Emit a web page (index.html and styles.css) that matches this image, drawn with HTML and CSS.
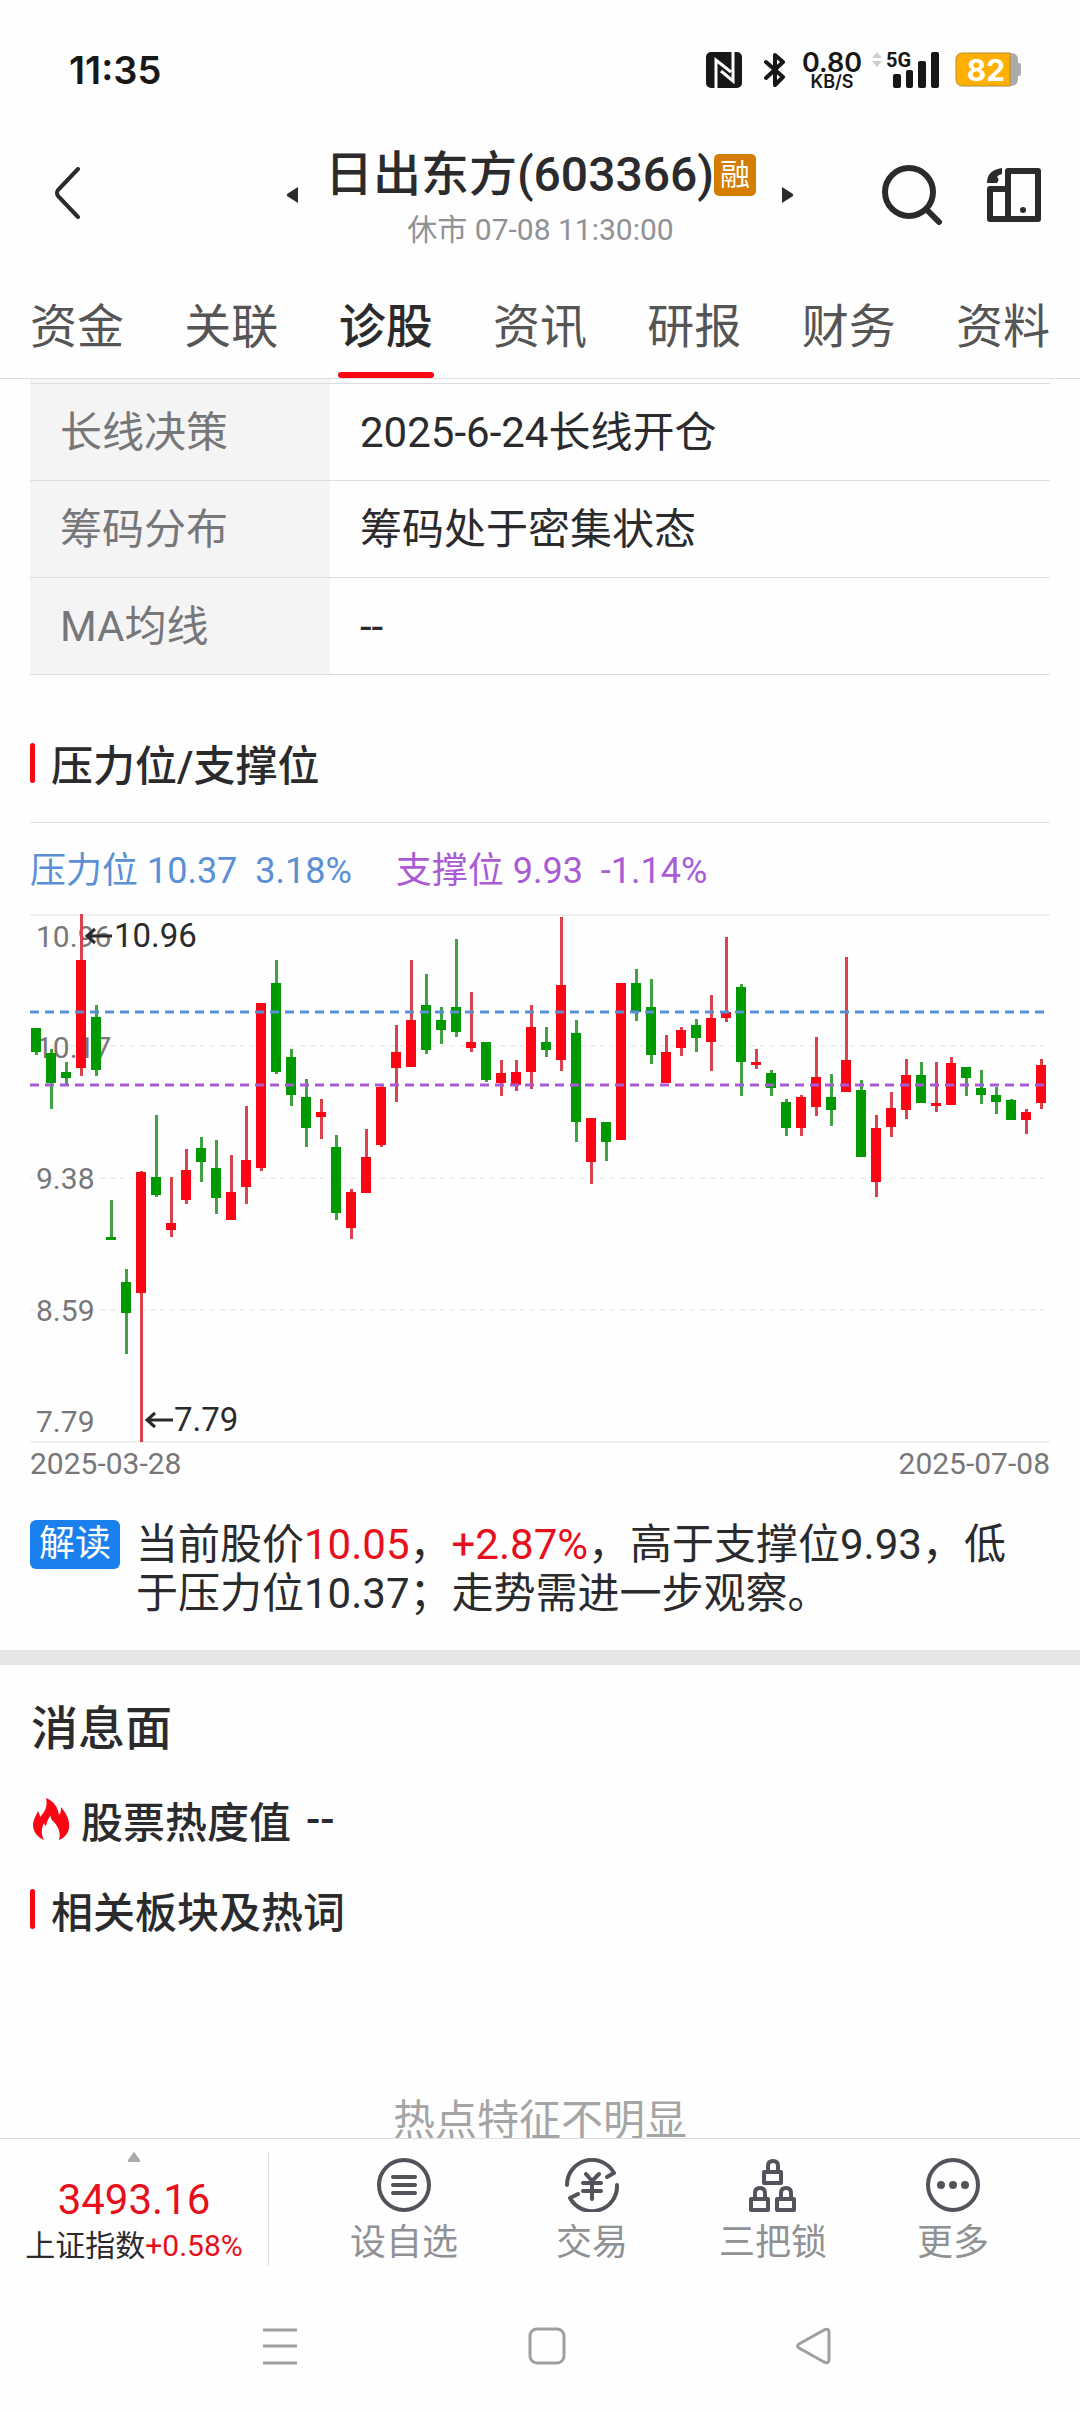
FILE: index.html
```html
<!DOCTYPE html>
<html lang="zh-CN">
<head>
	<meta charset="UTF-8">
	<meta name="viewport" content="width=device-width, initial-scale=1">
	<link rel="stylesheet" href="styles.css">
	<title>日出东方(603366)</title>
</head>
<body>
	<div class="status">
		<span class="time">11:35</span>
		<div class="status-icons">
			<svg class="nfc" width="36" height="36" viewBox="0 0 36 36">
				<rect width="36" height="36" rx="5" fill="#171717"/>
				<path d="M10 36V8l15 12M27 0v29L15 19" fill="none" stroke="#fff" stroke-width="3"/>
			</svg>
			<svg class="bt" width="22" height="36" viewBox="0 0 22 36">
				<path d="M2 10l17 15-8 8V3l8 7L2 26" fill="none" stroke="#171717" stroke-width="4" stroke-linejoin="round" stroke-linecap="round"/>
			</svg>
			<div class="speed"><b>0.80</b><small>KB/S</small></div>
			<svg class="signal" width="67" height="36" viewBox="0 0 67 36">
				<path d="M0 6l5-6 5 6zM0 9h10l-5 6z" fill="#cfcfcf"/>
				<text x="14" y="15" class="net">5G</text>
				<g fill="#171717">
					<rect x="21" y="22" width="8" height="14" rx="2"/>
					<rect x="34" y="18" width="7" height="18" rx="2"/>
					<rect x="46" y="9" width="8" height="27" rx="2"/>
					<rect x="59" width="8" height="36" rx="2"/>
				</g>
			</svg>
			<svg class="battery" width="66" height="36" viewBox="0 0 66 36">
				<path d="M54 1h2q7 0 7 7v3h1q2 0 2 3v7q0 3-2 3h-1v3q0 7-7 7h-2z" fill="#ababab"/>
				<path d="M55 1H8Q1 1 1 8v19q0 7 7 7h47z" fill="#ffb000" stroke="#b58a2a"/>
				<text x="31" y="29" text-anchor="middle" class="level">82</text>
			</svg>
		</div>
	</div>

	<header class="header">
		<div class="left">
			<button class="icon-btn" aria-label="返回">
				<svg width="28" height="52" viewBox="0 0 28 52"><path d="M25 2L5 23q-2 3 0 6l20 21" fill="none" stroke="#2b2b2d" stroke-width="4" stroke-linecap="round"/></svg>
			</button>
		</div>
		<div class="stock">
			<button class="icon-btn" aria-label="上一只">
				<svg width="12" height="18" viewBox="0 0 12 18"><path d="M12 1v16L1 10V8z" fill="#2b2b2d"/></svg>
			</button>
			<div class="title">
				<h1>日出东方(603366)<span class="badge">融</span></h1>
				<p>休市 07-08 11:30:00</p>
			</div>
			<button class="icon-btn" aria-label="下一只">
				<svg width="12" height="18" viewBox="0 0 12 18"><path d="M0 1v16l11-7V8z" fill="#2b2b2d"/></svg>
			</button>
		</div>
		<div class="right">
			<button class="icon-btn" aria-label="搜索">
				<svg width="62" height="62" viewBox="0 0 62 62" fill="none" stroke="#2b2b2d" stroke-width="6" stroke-linecap="round"><circle cx="28" cy="28" r="24"/><path d="M46 46l12 12"/></svg>
			</button>
			<button class="icon-btn" aria-label="多屏">
				<svg width="54" height="54" viewBox="0 0 54 54" fill="none" stroke="#2b2b2d" stroke-width="6" stroke-linejoin="round">
					<path d="M21 3h30v48H21zM21 21H3v30h18"/>
					<circle cx="36" cy="42" r="3" fill="#2b2b2d" stroke="none"/>
					<path d="M15 0Q0 2 0 15h10q3-4 0-6 1-2 5-3z" fill="#2b2b2d" stroke="none"/>
				</svg>
			</button>
		</div>
	</header>

	<nav class="tabs">
		<a href="#">资金</a>
		<a href="#">关联</a>
		<a href="#" class="active">诊股</a>
		<a href="#">资讯</a>
		<a href="#">研报</a>
		<a href="#">财务</a>
		<a href="#">资料</a>
	</nav>

	<main class="content">
		<section class="wrap">
			<table class="info">
				<tr class="cut"><th></th><td></td></tr>
				<tr><th>长线决策</th><td>2025-6-24长线开仓</td></tr>
				<tr><th>筹码分布</th><td>筹码处于密集状态</td></tr>
				<tr><th>MA均线</th><td>--</td></tr>
			</table>

			<h2 class="sub line">压力位/支撑位</h2>
			<div class="legend">
				<span class="blue">压力位 10.37&nbsp; 3.18%</span>
				<span class="purple">支撑位 9.93&nbsp; -1.14%</span>
			</div>
			<svg class="chart" id="chart" viewBox="0 0 1020 529">
				<path class="edge" d="M0 1h1020M0 528h1020"/>
				<path class="grid" d="M0 132h1020M0 264h1020M0 396h1020"/>
				<g class="axis">
					<text x="6" y="33">10.96</text>
					<text x="6" y="144">10.17</text>
					<text x="6" y="275">9.38</text>
					<text x="6" y="407">8.59</text>
					<text x="6" y="518">7.79</text>
				</g>
				<g id="candles"></g>
				<path class="press" d="M0 98h1020"/>
				<path class="hold" d="M0 171h1020"/>
				<g class="mark">
					<path d="M82 22H57M65 15l-8 7 8 7"/>
					<text x="84" y="33">10.96</text>
					<path d="M143 506h-26M125 499l-8 7 8 7"/>
					<text x="144" y="517">7.79</text>
				</g>
			</svg>
			<div class="dates"><span>2025-03-28</span><span>2025-07-08</span></div>
			<div class="explain">
				<span class="tag">解读</span>
				<p>当前股价<em>10.05</em>，<em>+2.87%</em>，高于支撑位9.93，低于压力位10.37；走势需进一步观察。</p>
			</div>
		</section>

		<section class="wrap news">
			<h2 class="big">消息面</h2>
			<div class="hot">
				<svg width="38" height="44" viewBox="0 0 38 44"><path d="M14 0c9 4 12 10 13 17 2-2 2-5 2-8 6 7 9 14 8 21-1 6-5 10-10 12 2-7 0-13-7-20-1-2-2-3-1-5-3 3-4 7-5 11-1-1-2-2-2-3-3 6-3 12 0 17C5 39 1 33 1 27c0-5 3-9 5-14 1 2 2 4 2 6 5-5 8-11 6-19z" fill="#fa0513"/></svg>
				<h3>股票热度值</h3>
				<span>--</span>
			</div>
			<h2 class="sub">相关板块及热词</h2>
			<p class="empty">热点特征不明显</p>
		</section>
	</main>

	<footer class="bar">
		<a href="#" class="index">
			<svg width="12" height="10" viewBox="0 0 12 10"><path d="M5 1L0 8v2h12V8L7 1q-1-2-2 0z" fill="#a9abad"/></svg>
			<strong>3493.16</strong>
			<span>上证指数<em>+0.58%</em></span>
		</a>
		<div class="actions">
			<button>
				<svg width="54" height="54" viewBox="0 0 54 54"><circle cx="27" cy="27" r="25"/><path d="M16 19h22M16 27h22M16 35h22"/></svg>
				设自选
			</button>
			<button>
				<svg width="54" height="54" viewBox="0 0 54 54"><path d="M2 27A25 25 0 0 1 49 15l-7 4M52 27A25 25 0 0 1 5 40l8-4M21 16l6 7 7-7M27 23v18M18 25h18M18 33h18"/></svg>
				交易
			</button>
			<button>
				<svg width="54" height="54" viewBox="0 0 54 54"><path d="M18 14h17v11H18zM22 13V8q0-5 5-5t5 5v5M5 41h17v11H5zM9 40v-5q0-5 5-5t5 5v5M31 41h17v11H31zM35 40v-5q0-5 5-5t5 5v5"/></svg>
				三把锁
			</button>
			<button>
				<svg width="54" height="54" viewBox="0 0 54 54"><circle cx="27" cy="27" r="25"/><path d="M15 27h0M27 27h0M39 27h0" stroke-width="8" class="dots"/></svg>
				更多
			</button>
		</div>
	</footer>

	<div class="sysnav">
		<button class="icon-btn" aria-label="最近任务"><svg width="36" height="38" viewBox="0 0 36 38"><path d="M1 3h34M1 19h34M1 36h34"/></svg></button>
		<button class="icon-btn" aria-label="主屏幕"><svg width="38" height="38" viewBox="0 0 38 38"><rect x="2" y="2" width="34" height="34" rx="7"/></svg></button>
		<button class="icon-btn" aria-label="后退"><svg width="36" height="38" viewBox="0 0 36 38"><path d="M29 3L4 17q-3 2 0 4l25 14q5 2 5-2V5q0-4-5-2z"/></svg></button>
	</div>

	<script src="script.js"></script>
</body>
</html>
```
FILE: styles.css
```css
* { margin: 0; padding: 0; box-sizing: border-box; }
body {
	display: flex;
	flex-direction: column;
	height: 100vh;
	overflow: hidden;
	background: #fefefe;
	color: #2b2b2d;
	font-family: Roboto, "Noto Sans CJK SC", sans-serif;
}
button { border: 0; background: none; font-family: inherit; }
a { color: inherit; text-decoration: none; }
em { color: #e60f1a; font-style: normal; }
svg { display: block; flex: none; }

/* 状态栏 */
.status {
	display: flex;
	justify-content: space-between;
	align-items: center;
	height: 110px;
	padding: 30px 59px 0 69px;
	font-family: Inter, sans-serif;
	color: #171717;
}
.time { font-size: 38px; font-weight: 600; }
.status-icons { display: flex; align-items: center; }
.nfc { margin-right: 22px; }
.bt { margin-right: 14px; }
.speed {
	display: flex;
	flex-direction: column;
	align-items: center;
	width: 64px;
	margin-right: 8px;
}
.speed b { font-size: 27px; font-weight: 600; line-height: 24px; }
.speed small { font-size: 18px; font-weight: 600; line-height: 14px; }
.signal { margin-right: 16px; overflow: visible; }
.net { font: 700 20px Roboto, sans-serif; fill: #171717; }
.level { font: 700 30px Inter, sans-serif; fill: #fff; }

/* 标题 */
.header {
	display: grid;
	grid-template-columns: 1fr auto 1fr;
	align-items: center;
	height: 170px;
	padding: 0 39px;
}
.left { padding-left: 14px; }
.stock { display: flex; align-items: center; }
.right { display: flex; align-items: center; justify-content: flex-end; gap: 44px; }
.title { margin: 10px 26px 0 27px; text-align: center; }
.title h1 {
	display: flex;
	align-items: center;
	font-size: 48px;
	font-weight: 500;
	line-height: 60px;
}
.title p { font-size: 30px; line-height: 50px; color: #8f9195; }
.badge {
	width: 42px;
	height: 42px;
	border-radius: 5px;
	background: #d47d00;
	color: #fff;
	font-size: 30px;
	font-weight: 400;
	line-height: 42px;
	text-align: center;
}

.tabs {
	display: flex;
	justify-content: space-between;
	height: 99px;
	padding: 0 29px;
	border-bottom: 1px solid #dedee0;
}
.tabs a {
	position: relative;
	padding: 0 1px;
	font-size: 47px;
	line-height: 94px;
	color: #555;
}
.tabs .active { font-weight: 500; color: #2b2b2d; }
.tabs .active::after {
	content: "";
	position: absolute;
	left: 0;
	right: 0;
	bottom: 0;
	height: 6px;
	border-radius: 3px;
	background: #fa0513;
}

.content { flex: 1 1 0; min-height: 0; overflow: hidden; }
.wrap { padding: 0 30px; }

.info { width: 100%; border-spacing: 0; table-layout: fixed; font-size: 42px; line-height: 60px; }
.info th, .info td {
	height: 97px;
	padding: 2px 30px 0;
	border-bottom: 1px solid #dedee0;
	font-weight: 400;
	text-align: left;
}
.info th { width: 300px; background: #f4f4f4; color: #77777a; }
.info .cut th, .info .cut td { height: 5px; }

.sub {
	display: flex;
	align-items: center;
	gap: 16px;
	height: 118px;
	padding-bottom: 2px;
	font-size: 42px;
	font-weight: 500;
}
.sub::before {
	content: "";
	width: 5px;
	height: 40px;
	border-radius: 3px;
	background: #fa0513;
}
.line { margin-top: 30px; border-bottom: 1px solid #dedee0; }

.legend { display: flex; gap: 44px; padding-top: 5px; font-size: 36px; line-height: 86px; }
.blue { color: #5b8fd6; }
.purple { color: #a95bd6; }

/* K线图 */
.chart { width: 100%; height: auto; }
.chart path { fill: none; }
.edge { stroke: #f0f0f0; stroke-width: 2; }
.grid { stroke: #f0f0f0; stroke-width: 2; stroke-dasharray: 5 5; }
.press { stroke: #5b8fd6; stroke-width: 3; stroke-dasharray: 9 6; }
.hold { stroke: #a95bd6; stroke-width: 3; stroke-dasharray: 9 6; }
.axis { font-size: 30px; fill: #77777a; }
.mark { font-size: 33px; fill: #2b2b2d; }
.mark path { stroke: #2b2b2d; stroke-width: 3; }
.up { fill: #fa0513; }
.down { fill: #009900; }
.up .wick { fill: #d9434b; }
.down .wick { fill: #3fa344; }

.dates {
	display: flex;
	justify-content: space-between;
	font-size: 30px;
	line-height: 42px;
	color: #77777a;
}
.explain {
	display: flex;
	align-items: flex-start;
	gap: 16px;
	margin-top: 35px;
	padding-right: 30px;
	font-size: 42px;
	line-height: 49px;
}
.tag {
	flex: none;
	width: 90px;
	border-radius: 6px;
	background: #1a80ee;
	color: #fff;
	font-size: 36px;
	text-align: center;
}

.news { margin-top: 32px; border-top: 15px solid #e5e5e7; }
.big { padding-left: 1px; font-size: 47px; font-weight: 500; line-height: 128px; }
.hot {
	display: flex;
	align-items: center;
	height: 58px;
	padding: 0 0 5px 2px;
	font-size: 42px;
}
.hot h3 { margin: 0 15px 0 11px; font-size: 42px; font-weight: 500; }
.hot span { font-weight: 500; }
.empty {
	margin-top: 122px;
	font-size: 42px;
	line-height: 60px;
	color: #a5a5a5;
	text-align: center;
}

/* 底部 */
.bar {
	display: flex;
	height: 142px;
	border-top: 1px solid #dedee0;
}
.index {
	display: flex;
	flex-direction: column;
	align-items: center;
	width: 269px;
	margin: 13px 0 14px;
	border-right: 1px solid #dedee0;
	font-size: 30px;
	line-height: 36px;
}
.index strong {
	margin-top: 10px;
	font-size: 42px;
	font-weight: 400;
	line-height: 56px;
	color: #e60f1a;
}
.actions {
	display: grid;
	grid-template-columns: 188fr 188fr 174fr 186fr;
	flex: 1;
	padding: 19px 34px 0 41px;
}
.actions button {
	display: flex;
	flex-direction: column;
	align-items: center;
	gap: 5px;
	font-size: 36px;
	line-height: 52px;
	color: #8f9195;
}
.actions svg { fill: none; stroke: #53535b; stroke-width: 4; stroke-linecap: round; stroke-linejoin: round; }

.sysnav {
	display: flex;
	justify-content: space-between;
	align-items: center;
	height: 132px;
	padding: 0 249px 0 262px;
}
.sysnav svg { fill: none; stroke: #9f9f9f; stroke-width: 3; }
```
FILE: script.js
```js
/* 每根K线: 涨跌, 最高, 实体上沿, 实体下沿, 最低 */
var data = [
	['down',114,114,138,141],['down',135,139,169,195],['down',148,158,164,170],['up',0,46,154,162],
	['down',91,103,156,162],['down',286,323,326,326],['down',355,368,399,440],['up',257,258,379,528],
	['down',201,263,281,283],['up',263,309,316,323],['up',235,256,286,290],['down',223,234,248,268],
	['down',226,254,284,300],['up',241,278,306,306],['up',192,246,273,290],['up',89,89,254,257],
	['down',46,69,158,160],['down',135,143,181,192],['down',165,183,214,233],['up',185,198,203,225],
	['down',221,233,299,306],['up',275,278,314,325],['up',215,243,279,279],['up',172,173,231,233],
	['up',111,138,154,188],['up',46,106,153,153],['down',60,91,136,140],['down',93,106,116,130],
	['down',25,93,118,123],['up',78,128,134,138],['down',128,128,166,168],['up',146,159,169,182],
	['up',146,158,171,177],['up',91,113,158,175],['down',113,128,136,143],['up',3,71,146,157],
	['down',106,119,208,228],['up',204,204,248,270],['down',208,208,228,247],['up',69,69,226,226],
	['down',55,69,98,107],['down',65,93,141,150],['up',121,138,169,169],['up',113,116,134,142],
	['down',105,111,124,138],['up',81,104,128,157],['up',23,98,104,108],['down',70,73,148,182],
	['up',135,148,151,155],['down',156,159,174,182],['down',185,188,214,222],['up',181,183,214,222],
	['up',123,163,193,202],['down',160,183,196,212],['up',43,146,178,178],['down',166,176,243,243],
	['up',201,214,268,283],['up',178,194,213,223],['up',145,161,196,205],['down',148,161,189,189],
	['up',148,189,192,198],['up',143,149,191,191],['down',153,153,164,182],['down',156,174,181,190],
	['down',173,181,188,200],['down',185,186,206,206],['up',195,198,206,220],['up',145,151,189,195]
];
var html = '';
for (var i = 0; i < data.length; i++) {
	var d = data[i];
	var x = 1 + i * 15;
	html += '<g class="' + d[0] + '">' +
		'<rect class="wick" x="' + (x + 4) + '" y="' + d[1] + '" width="3" height="' + (d[4] - d[1]) + '"/>' +
		'<rect x="' + x + '" y="' + d[2] + '" width="10" height="' + (d[3] - d[2]) + '"/></g>';
}
document.getElementById('candles').innerHTML = html;
```
